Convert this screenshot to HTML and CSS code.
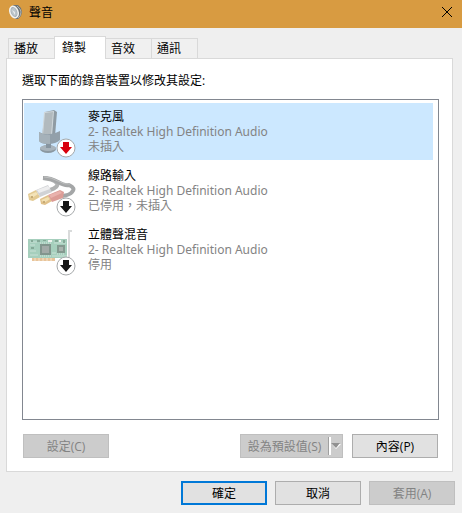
FILE: index.html
```html
<!DOCTYPE html>
<html lang="zh-Hant">
<head>
<meta charset="utf-8">
<title>聲音</title>
<link rel="stylesheet" href="styles.css">
</head>
<body>
<main class="dialog">
  <header class="titlebar">
    <svg class="app-icon" viewBox="0 0 16 16" aria-hidden="true">
      <path d="M5 1 10 1 13 4 14 8 13 12 10 15 7 15Z" fill="#6c7376"/>
      <path d="M9 2 12 5 13 8 12 12 10 14" fill="none" stroke="#aeb3b4"/>
      <ellipse cx="6" cy="8" rx="4" ry="6" transform="rotate(-20 6 8)" fill="#a5b0b6" stroke="#f2f2f0" stroke-width="1.500"/>
      <ellipse cx="6" cy="8" rx="2.500" ry="4" transform="rotate(-20 6 8)" fill="#bcc5ca"/>
      <path d="M4 6 7 8 7 11Z" fill="#e8ebec"/>
    </svg>
    <h1 class="title">聲音</h1>
    <button class="close" type="button" aria-label="關閉">
      <svg viewBox="0 0 10 10" aria-hidden="true"><path d="M0 0 10 10M10 0 0 10" stroke="#000" fill="none"/></svg>
    </button>
  </header>

  <div class="body">
    <div class="tabs" role="tablist">
      <button class="tab" type="button" role="tab" aria-selected="false">播放</button>
      <button class="tab tab-active" type="button" role="tab" aria-selected="true">錄製</button>
      <button class="tab" type="button" role="tab" aria-selected="false">音效</button>
      <button class="tab" type="button" role="tab" aria-selected="false">通訊</button>
    </div>

    <section class="panel" role="tabpanel">
      <p class="hint" id="hint">選取下面的錄音裝置以修改其設定:</p>
      <ul class="devices" role="listbox" aria-labelledby="hint">
        <li class="device device-selected" role="option" aria-selected="true">
          <svg class="device-icon" viewBox="0 0 48 48" aria-hidden="true">
            <ellipse cx="20" cy="41" rx="8" ry="4" fill="#8b98a1"/>
            <ellipse cx="20" cy="40" rx="8" ry="3" fill="#a9b4bc"/>
            <path d="M18 34H23V40H18Z" fill="#8795a0"/>
            <path d="M17 4 26 2 29 4 27 28 14 28Z" fill="#8f9ba3"/>
            <path d="M16 4 26 3 24 28 14 28Z" fill="#d0d8dc"/>
            <path d="M17 5 25 4 23 27 15 27Z" fill="#b2babe"/>
            <path d="M11 24Q19 29 32 23V32Q28 36 20 36 13 36 11 33Z" fill="#92a0aa"/>
            <path d="M11 24Q15 27 22 27V36Q13 36 11 33Z" fill="#a5b1b9"/>
          </svg>
          <svg class="badge" viewBox="0 0 20 20" aria-hidden="true"><circle cx="10" cy="10" r="9" fill="#fff" stroke="#a6a9ab"/><path d="M7 4H13V9H16L10 16 4 9H7Z" fill="#d9000d"/></svg>
          <div class="device-text">
            <span class="name">麥克風</span>
            <span class="info driver">2- Realtek High Definition Audio</span>
            <span class="info">未插入</span>
          </div>
        </li>
        <li class="device" role="option" aria-selected="false">
          <svg class="device-icon" viewBox="0 0 48 48" aria-hidden="true">
            <path d="M15 11Q25 12 29 16 31 20 22 23" fill="none" stroke="#b0b2b2" stroke-width="4"/>
            <path d="M15 11Q23 11 30 15T41 18Q48 21 44 25 42 28 34 29" fill="none" stroke="#a4a6a7" stroke-width="4"/>
            <path d="M16 10Q23 10 30 14T42 17" fill="none" stroke="#bec0c0"/>
            <path d="M0 27 8 23 12 30 5 34 1 33Z" fill="#e3ca93"/>
            <path d="M1 28 8 25 10 27 4 31Z" fill="#f3e3b9"/>
            <circle cx="4" cy="30" r="1" fill="#b99b65"/>
            <path d="M8 23 20 18 24 25 12 30Z" fill="#d0d2d5"/>
            <path d="M9 23 20 19 22 22 11 26Z" fill="#eeeeef"/>
            <path d="M12 32 20 28 24 34 17 38 13 37Z" fill="#e0c18a"/>
            <path d="M13 33 20 30 22 32 16 36Z" fill="#f2e0b2"/>
            <circle cx="16" cy="35" r="1" fill="#b99b65"/>
            <path d="M20 28 32 23 36 25 35 31 24 35Z" fill="#dc9c96"/>
            <path d="M21 28 32 24 34 26 23 31Z" fill="#e9b2ad"/>
          </svg>
          <svg class="badge" viewBox="0 0 20 20" aria-hidden="true"><circle cx="10" cy="10" r="9" fill="#fff" stroke="#a6a9ab"/><path d="M7 4H13V9H16L10 16 4 9H7Z" fill="#151515"/></svg>
          <div class="device-text">
            <span class="name">線路輸入</span>
            <span class="info driver">2- Realtek High Definition Audio</span>
            <span class="info">已停用，未插入</span>
          </div>
        </li>
        <li class="device" role="option" aria-selected="false">
          <svg class="device-icon" viewBox="0 0 48 48" aria-hidden="true">
            <path d="M44 5H41V39" fill="none" stroke="#d9dbdb" stroke-width="2"/>
            <path d="M0 13H39V32H0Z" fill="#a6cfbd"/>
            <path d="M4 32H27V35H4Z" fill="#e8c49a"/>
            <path d="M7 32V35M11 32V35M15 32V35M19 32V35M23 32V35" stroke="#f5e5cf"/>
            <path d="M2 16H9M2 19H7M2 25H8M2 29H10M24 27H28M24 30H39M26 17H38" stroke="#c9e1d6"/>
            <path d="M3 14H5V16H3ZM9 14H12V16H9ZM15 14H18V15H15ZM27 14H30V16H27ZM35 14H37V17H35ZM3 21H6V23H3Z" fill="#84a997"/>
            <path d="M20 14H24V16H20ZM31 14H33V16H31Z" fill="#eff3ef"/>
            <path d="M12 18H23V29H12Z" fill="#82958d"/>
            <path d="M14 20H21V27H14Z" fill="#a2aaa7"/>
            <path d="M29 19H37V27H29Z" fill="#84998f"/>
            <path d="M31 21H35V25H31Z" fill="#a9b3ae"/>
            <path d="M12 17H23M12 30H23M29 28H37" stroke="#d8e6df" stroke-dasharray="1 1"/>
          </svg>
          <svg class="badge" viewBox="0 0 20 20" aria-hidden="true"><circle cx="10" cy="10" r="9" fill="#fff" stroke="#a6a9ab"/><path d="M7 4H13V9H16L10 16 4 9H7Z" fill="#151515"/></svg>
          <div class="device-text">
            <span class="name">立體聲混音</span>
            <span class="info driver">2- Realtek High Definition Audio</span>
            <span class="info">停用</span>
          </div>
        </li>
      </ul>
      <div class="actions">
        <button class="btn" type="button" disabled>設定(C)</button>
        <div class="split">
          <button class="btn split-main" type="button" disabled>設為預設值(S)</button>
          <button class="btn split-arrow" type="button" aria-label="更多預設選項" disabled>
            <svg viewBox="0 0 10 6" aria-hidden="true"><path d="M1 1H10L5 6Z" fill="#fff"/><path d="M0 0H9L5 5Z" fill="#919191"/></svg>
          </button>
        </div>
        <button class="btn" type="button">內容(P)</button>
      </div>
    </section>
  </div>

  <footer class="footer">
    <button class="btn btn-default" type="button">確定</button>
    <button class="btn" type="button">取消</button>
    <button class="btn" type="button" disabled>套用(A)</button>
  </footer>
</main>
</body>
</html>
```
FILE: styles.css
```css
* { box-sizing: border-box; }
body {
  margin: 0;
  background: #efefef;
  color: #000;
  font: 12px/15px "Open Sans", "Noto Sans CJK TC", sans-serif;
}
button { font: inherit; color: inherit; padding: 0; border-radius: 0; }
svg { display: block; }
.dialog { min-height: 100vh; display: flex; flex-direction: column; }

.titlebar {
  height: 28px;
  padding: 0 10px 4px 8px;
  display: flex;
  align-items: center;
  gap: 5px;
  background: #d89b41;
}
.app-icon { width: 16px; height: 16px; }
.title { flex: 1; margin: 0; font-size: 12px; font-weight: 400; }
.close { border: 0; background: none; width: 10px; }
.close svg { width: 10px; height: 10px; }

.body { flex: 1; display: flex; flex-direction: column; padding: 8px 9px 0 6px; }
.tabs { display: flex; align-items: flex-end; padding-left: 2px; }
.tab {
  width: 46px;
  height: 20px;
  padding: 0 10px 0 5px;
  border: 1px solid #d9d9d9;
  border-bottom: 0;
  border-right: 0;
  background: #f0f0f0;
  text-align: left;
}
.tab:last-child { width: 47px; border-right: 1px solid #d9d9d9; }
.tab-active {
  position: relative;
  width: 52px;
  height: 23px;
  margin-bottom: -1px;
  padding: 0 0 2px 7px;
  border-right: 1px solid #d9d9d9;
  background: #fff;
}
.tab-active + .tab { width: 45px; border-left: 0; }
.panel {
  flex: 1;
  display: flex;
  flex-direction: column;
  padding: 14px 13px 13px 15px;
  border: 1px solid #d9d9d9;
  background: #fff;
}
.hint { margin: 0 0 11px; }
.devices {
  flex: 1;
  margin: 0;
  padding: 3px 5px 3px 1px;
  border: 1px solid #828790;
  list-style: none;
  display: flex;
  flex-direction: column;
  gap: 2px;
}
.device {
  position: relative;
  display: flex;
  align-items: center;
  gap: 12px;
  padding: 6px 4px;
}
.device-selected { background: #cce8ff; }
.device-icon { width: 48px; height: 48px; margin: -2px 0; }
.badge { position: absolute; left: 32px; bottom: 2px; width: 20px; height: 20px; }
.device-text { display: flex; flex-direction: column; }
.info { color: #838383; }
.driver { font-family: "Noto Sans", "Noto Sans CJK TC", sans-serif; }

.actions { display: flex; align-items: center; gap: 9px; padding: 14px 1px 0; }
.btn {
  width: 86px;
  height: 24px;
  border: 1px solid #adadad;
  background: #e1e1e1;
}
.btn:disabled { border-color: #bfbfbf; background: #ccc; color: #838383; }
.btn-default { border: 2px solid #0078d7; }
.split { display: flex; margin-left: auto; }
.split-main { width: 88px; border-right: 0; }
.split-arrow { position: relative; width: 15px; padding-left: 3px; border-left: 0; }
.split-arrow::before {
  content: "";
  position: absolute;
  left: 0;
  top: 2px;
  bottom: 2px;
  width: 2px;
  border-left: 1px solid #a0a0a0;
  background: #fff;
}
.split-arrow svg { width: 10px; height: 6px; }
.footer { display: flex; justify-content: flex-end; gap: 8px; padding: 9px 7px 8px 0; }
```
